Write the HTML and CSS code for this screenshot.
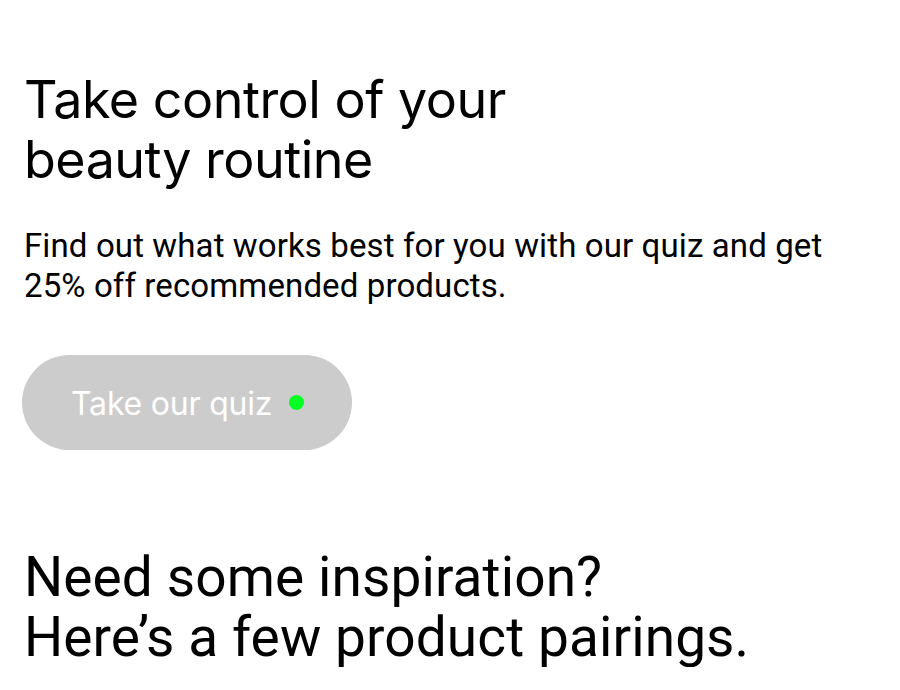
FILE: index.html
```html
<!DOCTYPE html>
<html lang="en">
<head>
<meta charset="utf-8">
<link rel="stylesheet" href="styles.css">
</head>
<body>
<main class="page">
  <section class="quiz">
    <h1 class="quiz-title">Take control of your<br>beauty routine</h1>
    <p class="quiz-text">Find out what works best for you with our quiz and get<br>25% off recommended products.</p>
    <button class="quiz-btn" type="button"><span class="quiz-btn-label">Take our quiz</span><span class="dot"></span></button>
  </section>
  <section class="pairings">
    <h2 class="pairings-title">Need some inspiration?<br>Here’s a few product pairings.</h2>
  </section>
</main>
</body>
</html>
```
FILE: styles.css
```css
html, body { margin: 0; padding: 0; background: #fff; }
.page { padding: 70px 24px 0 24px; color: #000; }
.quiz-title {
  margin: 0;
  font-family: Inter, "Noto Sans", sans-serif;
  font-weight: 400;
  font-size: 52px;
  line-height: 60px;
  letter-spacing: -0.5px;
}
.quiz-text {
  margin: 36px 0 0 0;
  font-family: Roboto, "Liberation Sans", sans-serif;
  font-size: 33px;
  line-height: 40px;
  letter-spacing: 0.12px;
}
.quiz-btn {
  margin: 49px 0 0 -2px;
  width: 330px;
  height: 95px;
  border: 0;
  border-radius: 48px;
  background: #cccccc;
  color: #fff;
  display: flex;
  align-items: center;
  gap: 17px;
  padding: 0 0 0 49px;
  font-family: Inter, "Noto Sans", sans-serif;
  font-size: 32px;
  letter-spacing: -0.2px;
}
.quiz-btn-label { padding-top: 2px; }
.dot { width: 15px; height: 15px; border-radius: 50%; background: #00ff22; }
.pairings { margin-top: 97px; }
.pairings-title {
  margin: 0;
  font-family: Roboto, "Liberation Sans", sans-serif;
  font-weight: 400;
  font-size: 55px;
  line-height: 60px;
  letter-spacing: 0.1px;
}
```
